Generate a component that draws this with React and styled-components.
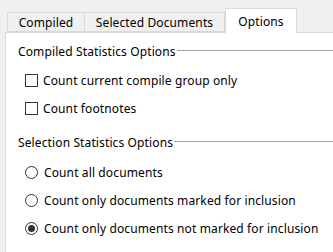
import React, { useState } from 'react';
import styled, { createGlobalStyle } from 'styled-components';

const GlobalStyle = createGlobalStyle`
  html, body {
    margin: 0;
    padding: 0;
    background: #f0f0f0;
  }
  body {
    font-family: 'Noto Sans', 'Liberation Sans', sans-serif;
    font-size: 12px;
    letter-spacing: 0.12px;
    color: #000000;
  }
`;

const Window = styled.div`
  width: 333px;
  height: 252px;
  display: flex;
  flex-direction: column;
  overflow: hidden;
  background: #f0f0f0;
`;

const TabStrip = styled.div`
  display: flex;
  align-items: flex-end;
  height: 24px;
  padding: 8px 0 0 7px;
  position: relative;
  z-index: 1;
`;

const Tab = styled.div`
  box-sizing: border-box;
  width: ${(p) => p.$width}px;
  height: ${(p) => (p.$active ? 25 : 20)}px;
  margin-bottom: ${(p) => (p.$active ? -1 : 0)}px;
  border: 1px solid #d9d9d9;
  border-bottom: ${(p) => (p.$active ? 'none' : '1px solid #d9d9d9')};
  border-left: ${(p) => (p.$first || p.$active ? '1px solid #d9d9d9' : 'none')};
  background: ${(p) => (p.$active ? '#ffffff' : '#f0f0f0')};
  display: flex;
  align-items: ${(p) => (p.$active ? 'flex-start' : 'center')};
  padding-top: ${(p) => (p.$active ? 4 : 0)}px;
  justify-content: center;
  cursor: default;
  white-space: nowrap;
`;

const Panel = styled.div`
  flex: 1;
  margin-left: 5px;
  border-left: 1px solid #d9d9d9;
  border-top: 1px solid #d9d9d9;
  background: #ffffff;
  padding: 11px 0 0 12px;
`;

const Group = styled.div`
  display: flex;
  flex-direction: column;
  margin-top: ${(p) => p.$top || 0}px;
`;

const GroupTitle = styled.div`
  display: flex;
  align-items: flex-start;
  height: 16px;
  line-height: 16px;
  white-space: nowrap;
`;

const TitleRule = styled.div`
  flex: 1;
  height: 1px;
  margin: 6px 0 0 1px;
  background: #a0a0a0;
`;

const OptionRow = styled.label`
  display: flex;
  align-items: center;
  height: 28px;
  padding-left: 7px;
  white-space: nowrap;
  cursor: default;
  margin-top: ${(p) => p.$top || 0}px;
`;

const CheckBox = styled.span`
  box-sizing: border-box;
  width: 13px;
  height: 13px;
  border: 1px solid #333333;
  background: #ffffff;
  margin-right: 5px;
  flex: none;
`;

const RadioDot = styled.span`
  box-sizing: border-box;
  width: 13px;
  height: 13px;
  border: 1px solid #333333;
  border-radius: 50%;
  background: #ffffff;
  margin-right: 6px;
  flex: none;
  display: flex;
  align-items: center;
  justify-content: center;

  &::after {
    content: '';
    width: 7px;
    height: 7px;
    border-radius: 50%;
    background: ${(p) => (p.$checked ? '#333333' : 'transparent')};
  }
`;

const tabs = [
  { name: 'Compiled', width: 78 },
  { name: 'Selected Documents', width: 140 },
  { name: 'Options', width: 72 },
];

const radios = [
  'Count all documents',
  'Count only documents marked for inclusion',
  'Count only documents not marked for inclusion',
];

const App = () => {
  const [selection, setSelection] = useState(2);

  return (
    <>
      <GlobalStyle />
      <Window>
        <TabStrip>
          {tabs.map((t, i) => (
            <Tab key={t.name} $width={t.width} $first={i === 0} $active={t.name === 'Options'}>
              {t.name}
            </Tab>
          ))}
        </TabStrip>
        <Panel>
          <Group>
            <GroupTitle>
              Compiled Statistics Options
              <TitleRule />
            </GroupTitle>
            <OptionRow $top={6}>
              <CheckBox />
              Count current compile group only
            </OptionRow>
            <OptionRow>
              <CheckBox />
              Count footnotes
            </OptionRow>
          </Group>
          <Group $top={13}>
            <GroupTitle>
              Selection Statistics Options
              <TitleRule />
            </GroupTitle>
            {radios.map((r, i) => (
              <OptionRow key={r} $top={i === 0 ? 7 : 0} onClick={() => setSelection(i)}>
                <RadioDot $checked={selection === i} />
                {r}
              </OptionRow>
            ))}
          </Group>
        </Panel>
      </Window>
    </>
  );
};

export default App;
